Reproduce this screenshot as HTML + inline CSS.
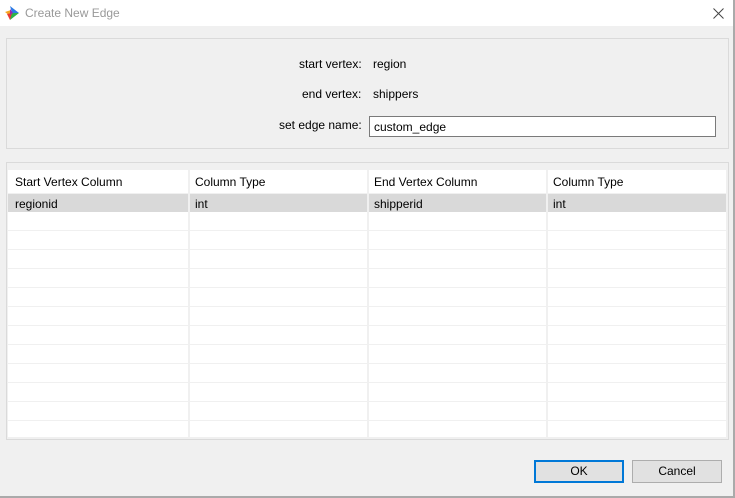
<html><head><style>
body{margin:0;width:735px;height:498px;background:#f0f0f0;font-family:"Liberation Sans",sans-serif;font-size:12px;color:#000;position:relative;overflow:hidden}
.a{position:absolute}
</style></head><body>
<div class="a" style="left:0;top:0;width:733px;height:26px;background:#fff"></div>
<svg class="a" style="left:4px;top:5px" width="16" height="16" viewBox="0 0 16 16"><polygon points="1,7 7,5 6,11" fill="#f5a623"/><polygon points="6,1 15,8 8,8" fill="#2c7be5"/><polygon points="7,8 15,8 6,15" fill="#2db34a"/><polygon points="3,9 8,8 6,15" fill="#e53935"/><polygon points="6,4 9,8 6,10" fill="#9c27b0"/></svg>
<div class="a" style="left:25px;top:6px;color:#999;font-size:12px">Create New Edge</div>
<svg class="a" style="left:713px;top:8px" width="11" height="11" viewBox="0 0 11 11"><path d="M0.5 0.5L10.5 10.5M10.5 0.5L0.5 10.5" stroke="#444" stroke-width="1"/></svg>
<div class="a" style="left:733px;top:0;width:2px;height:498px;background:#aaa"></div>
<div class="a" style="left:0;top:496px;width:735px;height:2px;background:#aaa"></div>
<div class="a" style="left:6px;top:38px;width:721px;height:109px;border:1px solid #dadada"></div>
<div class="a" style="left:299px;top:57px">start vertex:</div>
<div class="a" style="left:373px;top:57px">region</div>
<div class="a" style="left:302px;top:87px">end vertex:</div>
<div class="a" style="left:373px;top:87px">shippers</div>
<div class="a" style="left:279px;top:118px">set edge name:</div>
<div class="a" style="left:369px;top:116px;width:345px;height:19px;background:#fff;border:1px solid #7a7a7a"></div>
<div class="a" style="left:374px;top:120px">custom_edge</div>
<div class="a" style="left:6px;top:162px;width:721px;height:276px;border:1px solid #dadada"></div>
<div class="a" style="left:8px;top:170px;width:718px;height:267px;background:#fff"></div>
<div class="a" style="left:8px;top:194px;width:718px;height:18px;background:#d9d9d9"></div>
<div class="a" style="left:8px;top:193px;width:718px;height:1px;background:#f0f0f0"></div>
<div class="a" style="left:8px;top:0;width:718px;height:498px;background:repeating-linear-gradient(to bottom,transparent 0,transparent 18px,#f0f0f0 18px,#f0f0f0 19px);background-position:0 212px;clip-path:inset(212px 0 61px 0)"></div>
<div class="a" style="left:188px;top:170px;width:2px;height:267px;background:#f0f0f0"></div>
<div class="a" style="left:367px;top:170px;width:2px;height:267px;background:#f0f0f0"></div>
<div class="a" style="left:546px;top:170px;width:2px;height:267px;background:#f0f0f0"></div>
<div class="a" style="left:15px;top:175px">Start Vertex Column</div>
<div class="a" style="left:195px;top:175px">Column Type</div>
<div class="a" style="left:374px;top:175px">End Vertex Column</div>
<div class="a" style="left:553px;top:175px">Column Type</div>
<div class="a" style="left:15px;top:197px">regionid</div>
<div class="a" style="left:195px;top:197px">int</div>
<div class="a" style="left:374px;top:197px">shipperid</div>
<div class="a" style="left:553px;top:197px">int</div>
<div class="a" style="left:534px;top:460px;width:86px;height:19px;background:#e1e1e1;border:2px solid #0078d7;text-align:center;line-height:19px">OK</div>
<div class="a" style="left:632px;top:460px;width:88px;height:21px;background:#e1e1e1;border:1px solid #adadad;text-align:center;line-height:21px">Cancel</div>
</body></html>
